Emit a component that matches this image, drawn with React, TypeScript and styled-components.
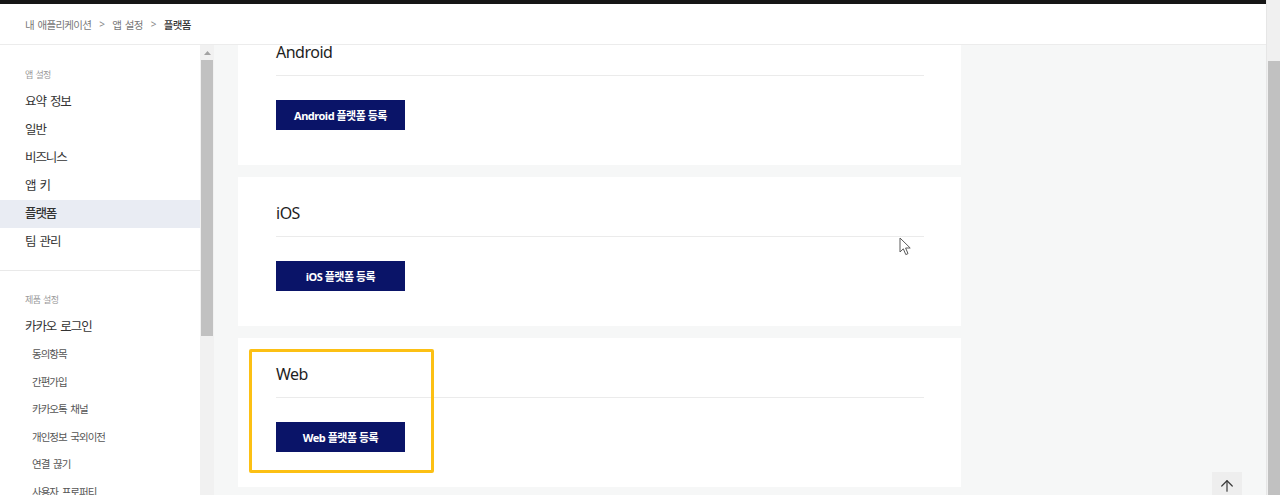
import React from "react";
import styled, { createGlobalStyle } from "styled-components";
import { ArrowUp } from "lucide-react";

const GlobalStyle = createGlobalStyle`
  html, body { margin: 0; padding: 0; }
  body {
    overflow: hidden;
    font-family: "Noto Sans", "Noto Sans CJK KR", sans-serif;
    background: #ffffff;
  }
  * { box-sizing: border-box; }
`;

const Page = styled.div`
  display: flex;
  width: 1280px;
  height: 495px;
  overflow: hidden;
`;

const Column = styled.div`
  flex: 1;
  display: flex;
  flex-direction: column;
  min-width: 0;
`;

const TopBar = styled.div`
  height: 4px;
  background: #161616;
  flex: none;
`;

const Header = styled.header`
  height: 41px;
  flex: none;
  background: #fff;
  border-bottom: 1px solid #ececec;
  display: flex;
  align-items: center;
  padding-left: 25px;
  gap: 7px;
  font-family: "Noto Sans", "Noto Sans CJK KR", sans-serif;
  font-size: 10.5px;
  letter-spacing: -0.7px;
  word-spacing: 1.5px;
  color: #777;
`;

const Crumb = styled.span<{ $current?: boolean }>`
  color: ${(p) => (p.$current ? "#333" : "#777")};
  font-weight: ${(p) => (p.$current ? 500 : 400)};
`;

const Sep = styled.span`
  color: #888;
  font-size: 10px;
  padding: 0 1px;
`;

const Body = styled.div`
  flex: 1;
  display: flex;
  min-height: 0;
`;

const Sidebar = styled.nav`
  width: 200px;
  flex: none;
  background: #fff;
  overflow: hidden;
`;

const Section = styled.div<{ $last?: boolean }>`
  padding: ${(p) => (p.$last ? "22px 0 0" : "23px 0 14px")};
  border-bottom: ${(p) => (p.$last ? "none" : "1px solid #e9e9e9")};
`;

const SectionLabel = styled.div`
  height: 14px;
  line-height: 14px;
  padding-left: 25px;
  margin-bottom: 6px;
  font-size: 9px;
  letter-spacing: -0.6px;
  word-spacing: 1px;
  color: #9a9a9a;
`;

const NavItem = styled.div<{ $active?: boolean }>`
  height: 28px;
  line-height: 28px;
  padding-left: 25px;
  font-size: 12.5px;
  letter-spacing: -1.1px;
  word-spacing: 2px;
  color: #333;
  background: ${(p) => (p.$active ? "#e9ecf3" : "transparent")};
  font-weight: ${(p) => (p.$active ? 500 : 400)};
`;

const SubItem = styled.div`
  height: 27.5px;
  line-height: 27.5px;
  padding-left: 32px;
  font-size: 10.5px;
  letter-spacing: -1px;
  word-spacing: 2px;
  color: #555;
`;

const ScrollTrack = styled.div`
  width: 14px;
  flex: none;
  background: #f1f1f1;
  display: flex;
  flex-direction: column;
  align-items: center;
`;

const ScrollArrow = styled.div`
  height: 15px;
  display: flex;
  align-items: center;
  justify-content: center;
`;

const Thumb = styled.div<{ $height: number }>`
  width: 12px;
  height: ${(p) => p.$height}px;
  background: #c1c1c1;
  flex: none;
`;

const PageTrack = styled.div`
  width: 14px;
  flex: none;
  background: #f0f0f0;
  display: flex;
  flex-direction: column;
  align-items: center;
  padding-top: 61px;
  border-left: 1px solid #e6e6e6;
`;

const Main = styled.main`
  flex: 1;
  position: relative;
  background: #f6f7f7;
  overflow: hidden;
  padding: 0 24px;
`;

const CardList = styled.div`
  margin-top: -29px;
  width: 723px;
  display: flex;
  flex-direction: column;
  gap: 12px;
`;

const Card = styled.section`
  position: relative;
  background: #fff;
  padding: 25px 37px 35px 38px;
  height: 149px;
`;

const CardTitle = styled.h3`
  margin: 0;
  height: 22px;
  line-height: 22px;
  font-size: 16px;
  font-weight: 400;
  letter-spacing: -0.5px;
  color: #1e1e1e;
`;

const Divider = styled.hr`
  margin: 12px 0 24px;
  border: none;
  border-top: 1px solid #ebebeb;
  height: 0;
`;

const PrimaryButton = styled.button`
  width: 129px;
  height: 30px;
  border: none;
  background: #0a1468;
  color: #fff;
  font-family: "Noto Sans", "Noto Sans CJK KR", sans-serif;
  font-size: 11px;
  font-weight: 700;
  letter-spacing: -0.5px;
  display: flex;
  align-items: center;
  justify-content: center;
  padding: 0;
  cursor: pointer;
`;

const Highlight = styled.div`
  position: absolute;
  left: 11px;
  top: 11px;
  width: 185px;
  height: 124px;
  border: 3px solid #fcc014;
  border-radius: 2px;
  pointer-events: none;
`;

const ToTop = styled.button`
  position: absolute;
  left: 998px;
  top: 427px;
  width: 30px;
  height: 30px;
  border: none;
  padding: 5px 0 0;
  background: #eeeeee;
  display: flex;
  justify-content: center;
  align-items: flex-start;
  color: #3a3a3a;
`;

const Pointer = styled.svg`
  position: absolute;
  left: 685px;
  top: 192px;
  pointer-events: none;
`;

const platforms = ["Android", "iOS", "Web"];

export default function App() {
  return (
    <>
      <GlobalStyle />
      <Page>
        <Column>
          <TopBar />
          <Header>
            <Crumb>내 애플리케이션</Crumb>
            <Sep>&gt;</Sep>
            <Crumb>앱 설정</Crumb>
            <Sep>&gt;</Sep>
            <Crumb $current>플랫폼</Crumb>
          </Header>
          <Body>
            <Sidebar>
              <Section>
                <SectionLabel>앱 설정</SectionLabel>
                <NavItem>요약 정보</NavItem>
                <NavItem>일반</NavItem>
                <NavItem>비즈니스</NavItem>
                <NavItem>앱 키</NavItem>
                <NavItem $active>플랫폼</NavItem>
                <NavItem>팀 관리</NavItem>
              </Section>
              <Section $last>
                <SectionLabel>제품 설정</SectionLabel>
                <NavItem>카카오 로그인</NavItem>
                <SubItem>동의항목</SubItem>
                <SubItem>간편가입</SubItem>
                <SubItem>카카오톡 채널</SubItem>
                <SubItem>개인정보 국외이전</SubItem>
                <SubItem>연결 끊기</SubItem>
                <SubItem>사용자 프로퍼티</SubItem>
              </Section>
            </Sidebar>
            <ScrollTrack>
              <ScrollArrow>
                <svg width="7" height="4" viewBox="0 0 7 4">
                  <path d="M0 4 L3.5 0 L7 4 Z" fill="#a3a3a3" />
                </svg>
              </ScrollArrow>
              <Thumb $height={276} />
            </ScrollTrack>
            <Main>
              <CardList>
                {platforms.map((p) => (
                  <Card key={p}>
                    <CardTitle>{p}</CardTitle>
                    <Divider />
                    <PrimaryButton>{p} 플랫폼 등록</PrimaryButton>
                    {p === "Web" && <Highlight />}
                  </Card>
                ))}
              </CardList>
              <Pointer width="13" height="19" viewBox="0 0 13 19">
                <path
                  d="M1 1 L1 15 L4.3 11.8 L6.8 17.6 L9 16.6 L6.6 11 L11.2 11 Z"
                  fill="#ffffff"
                  stroke="#5a5a5a"
                  strokeWidth="1"
                  strokeLinejoin="round"
                />
              </Pointer>
              <ToTop aria-label="맨 위로">
                <ArrowUp size={18} strokeWidth={1.6} />
              </ToTop>
            </Main>
          </Body>
        </Column>
        <PageTrack>
          <Thumb $height={440} />
        </PageTrack>
      </Page>
    </>
  );
}
